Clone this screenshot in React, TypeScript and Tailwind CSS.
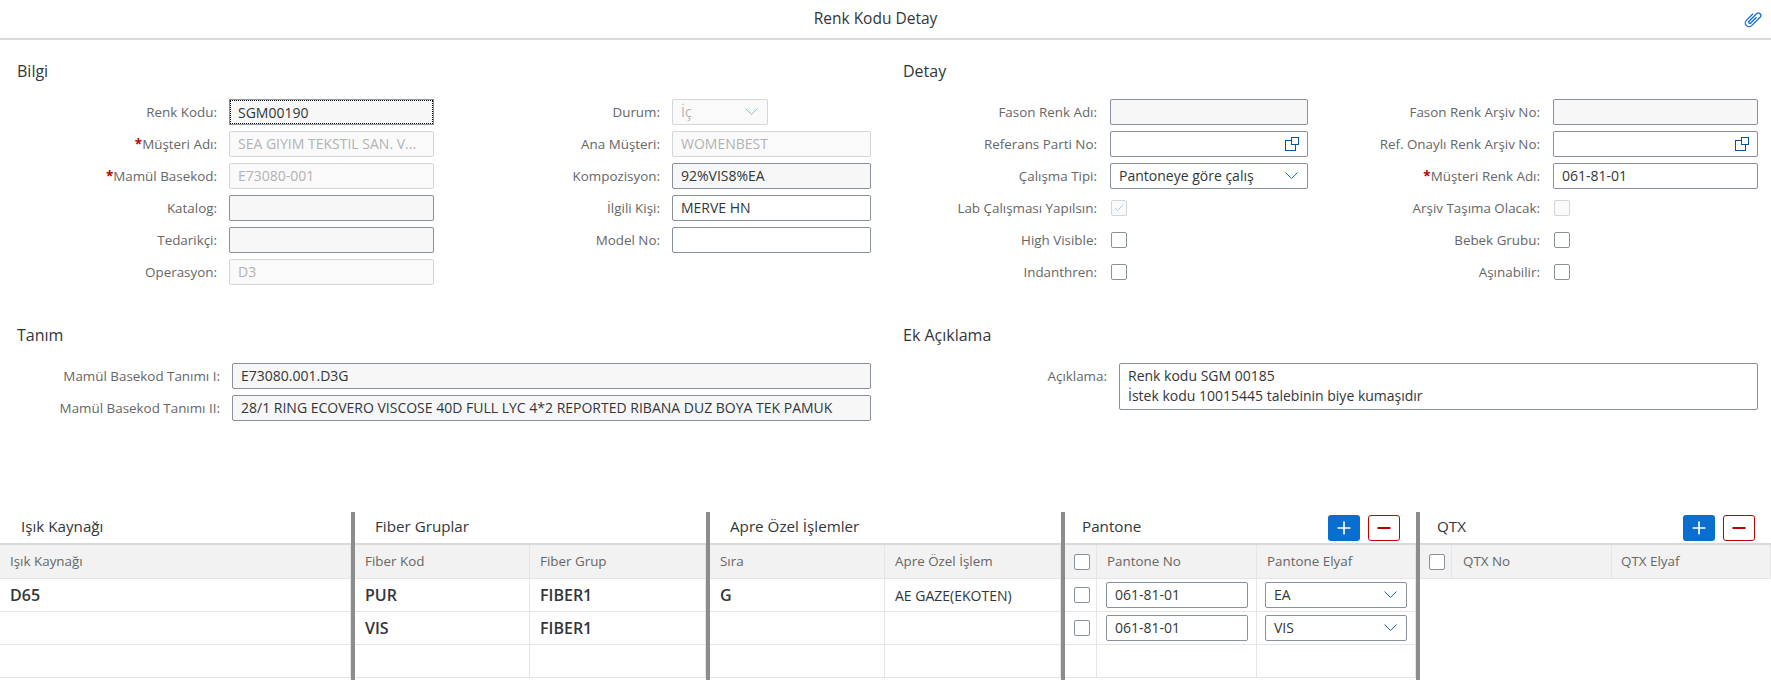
import { ReactNode } from "react";
import { Check, Plus, Minus } from "lucide-react";

const labelCls = "text-right text-[13.4px] text-[#666666] whitespace-nowrap leading-[26px]";
const inputBase = "h-[26px] rounded-[2px] border px-[8px] text-[14px] leading-[24px] whitespace-nowrap overflow-hidden";
const editable = "border-[#89919a] bg-white text-[#32363a]";
const readonly = "border-[#89919a] bg-[#f7f7f7] text-[#32363a]";
const disabled = "border-[#d3d6d9] bg-[#fafafa] text-[#b3b3b3]";

function Label({ text, required, width }: { text: string; required?: boolean; width: number }) {
    return (
        <div className={labelCls} style={{ width }}>
            {required && <span className="font-bold text-[#b00]">*</span>}
            {text}:
        </div>
    );
}

function ValueHelp() {
    return (
        <svg width="14" height="14" viewBox="0 0 14 14" fill="none" stroke="#0854a0" strokeWidth="1">
            <rect x="0.5" y="3.5" width="10" height="10" />
            <rect x="6.5" y="0.5" width="7" height="7" fill="white" />
        </svg>
    );
}

function Chevron({ dim }: { dim?: boolean }) {
    return (
        <svg width="13" height="8" viewBox="0 0 13 8" fill="none" stroke={dim ? "#8fb8e2" : "#0a6ed1"} strokeWidth="1">
            <path d="M0.5 0.5L6.5 6.5L12.5 0.5" />
        </svg>
    );
}

function Select({ value, dim, width }: { value: string; dim?: boolean; width: number }) {
    return (
        <div style={{ width }} className={`${inputBase} ${dim ? disabled : editable} flex items-center justify-between pr-[9px]`}>
            <span>{value}</span>
            <Chevron dim={dim} />
        </div>
    );
}

function Field({ value, cls, width, children }: { value?: string; cls: string; width: number; children?: ReactNode }) {
    return (
        <div style={{ width }} className={`${inputBase} ${cls} flex items-center justify-between pr-[8px]`}>
            <span>{value}</span>
            {children}
        </div>
    );
}

function CheckBox({ on, dim }: { on?: boolean; dim?: boolean }) {
    return (
        <div className={`flex h-[16px] w-[16px] items-center justify-center rounded-[2px] border ${dim ? "border-[#d3d6d9] bg-[#fafafa]" : "border-[#89919a] bg-white"}`}>
            {on && <Check size={12} strokeWidth={1.2} className="text-[#7aa9d8]" />}
        </div>
    );
}

function Row({ children }: { children: ReactNode }) {
    return <div className="flex h-[26px] items-center">{children}</div>;
}

function Title({ children, className = "" }: { children: ReactNode; className?: string }) {
    return <div className={`text-[16px] leading-[20px] text-[#32363a] ${className}`}>{children}</div>;
}

function TableButtons() {
    return (
        <div className="flex gap-[8px]">
            <div className="flex h-[26px] w-[32px] items-center justify-center rounded-[3px] bg-[#0a6ed1] text-white">
                <Plus size={20} strokeWidth={2} />
            </div>
            <div className="flex h-[26px] w-[32px] items-center justify-center rounded-[3px] border border-[#bb0000] bg-white text-[#bb0000]">
                <Minus size={20} strokeWidth={2.2} />
            </div>
        </div>
    );
}

type Col = { w: number; t?: ReactNode; pl?: number; bodyPl?: number };

function Panel({ title, width, cols, rows, tools, divider = true, titlePl }: { title: string; width: number; cols: Col[]; rows: ReactNode[][]; tools?: boolean; divider?: boolean; titlePl: number }) {
    return (
        <div style={{ width }} className={`h-[168px] shrink-0 overflow-hidden ${divider ? "border-r-4 border-[#8c8c8c]" : ""}`}>
            <div className="flex h-[31px] items-center justify-between pr-[16px]" style={{ paddingLeft: titlePl }}>
                <div className="-mt-[2px] text-[15.2px] text-[#32363a]">{title}</div>
                {tools && <TableButtons />}
            </div>
            <div className="flex h-[36px] items-center border-t-2 border-b border-t-[#d9d9d9] border-b-[#e5e5e5] bg-[#f2f2f2]">
                {cols.map((c, i) => (
                    <div key={i} style={{ width: c.w, paddingLeft: c.pl ?? 10 }} className="flex h-full shrink-0 items-center border-r border-[#e5e5e5] text-[13.4px] text-[#666666]">
                        {c.t}
                    </div>
                ))}
            </div>
            {rows.map((r, ri) => (
                <div key={ri} className="flex h-[33px] items-center border-b border-[#e5e5e5]">
                    {r.map((cell, i) => (
                        <div key={i} style={{ width: cols[i].w, paddingLeft: cols[i].bodyPl ?? cols[i].pl ?? 10 }} className="flex h-full shrink-0 items-center border-r border-[#e5e5e5] text-[14px] text-[#32363a]">
                            {cell}
                        </div>
                    ))}
                </div>
            ))}
        </div>
    );
}

const B = ({ children }: { children: ReactNode }) => <span className="text-[16px] font-semibold">{children}</span>;

export default function App() {
    return (
        <div className="h-[680px] w-[1771px] overflow-hidden bg-white font-['Open_Sans','Liberation_Sans',sans-serif]">
            <header className="flex h-[40px] items-center justify-center border-b-2 border-[#d9d9d9] pr-[20px]">
                <div className="flex-1" />
                <div className="text-[15.5px] text-[#32363a]">Renk Kodu Detay</div>
                <div className="flex flex-1 justify-end">
                    {/* paperclip */}
                    <svg width="20" height="20" viewBox="0 0 16 16" fill="none" stroke="#0a6ed1" strokeWidth="1" className="-mr-[12px]">
                        <g transform="rotate(45 8 8)">
                            <path d="M5 5V12.5a3 3 0 0 0 6 0V3a2 2 0 0 0-4 0V11.5a1 1 0 0 0 2 0V5" />
                        </g>
                    </svg>
                </div>
            </header>

            <div className="flex pt-[21px]">
                <section className="w-[886px] pl-[17px]">
                    <Title>Bilgi</Title>
                    <div className="mt-[18px] flex">
                        <div className="flex flex-col gap-[6px]">
                            <Row><Label text="Renk Kodu" width={200} /><div className="ml-[12px]"><div className="flex h-[26px] w-[205px] items-center border border-[#89919a] bg-[#f7f7f7] px-[8px] text-[14px] text-[#32363a] outline-1 -outline-offset-2 outline-dotted outline-black">SGM00190</div></div></Row>
                            <Row><Label text="Müşteri Adı" required width={200} /><div className="ml-[12px]"><Field value="SEA GIYIM TEKSTIL SAN. V..." cls={disabled} width={205} /></div></Row>
                            <Row><Label text="Mamül Basekod" required width={200} /><div className="ml-[12px]"><Field value="E73080-001" cls={disabled} width={205} /></div></Row>
                            <Row><Label text="Katalog" width={200} /><div className="ml-[12px]"><Field cls={readonly} width={205} /></div></Row>
                            <Row><Label text="Tedarikçi" width={200} /><div className="ml-[12px]"><Field cls={readonly} width={205} /></div></Row>
                            <Row><Label text="Operasyon" width={200} /><div className="ml-[12px]"><Field value="D3" cls={disabled} width={205} /></div></Row>
                        </div>
                        <div className="flex flex-col gap-[6px]">
                            <Row><Label text="Durum" width={226} /><div className="ml-[12px]"><Select value="İç" dim width={96} /></div></Row>
                            <Row><Label text="Ana Müşteri" width={226} /><div className="ml-[12px]"><Field value="WOMENBEST" cls={disabled} width={199} /></div></Row>
                            <Row><Label text="Kompozisyon" width={226} /><div className="ml-[12px]"><Field value="92%VIS8%EA" cls={readonly} width={199} /></div></Row>
                            <Row><Label text="İlgili Kişi" width={226} /><div className="ml-[12px]"><Field value="MERVE HN" cls={editable} width={199} /></div></Row>
                            <Row><Label text="Model No" width={226} /><div className="ml-[12px]"><Field cls={editable} width={199} /></div></Row>
                        </div>
                    </div>
                </section>
                <section className="flex-1 pl-[17px]">
                    <Title>Detay</Title>
                    <div className="mt-[18px] flex">
                        <div className="flex flex-col gap-[6px]">
                            <Row><Label text="Fason Renk Adı" width={194} /><div className="ml-[13px]"><Field cls={readonly} width={198} /></div></Row>
                            <Row><Label text="Referans Parti No" width={194} /><div className="ml-[13px]"><Field cls={editable} width={198}><ValueHelp /></Field></div></Row>
                            <Row><Label text="Çalışma Tipi" width={194} /><div className="ml-[13px]"><Select value="Pantoneye göre çalış" width={198} /></div></Row>
                            <Row><Label text="Lab Çalışması Yapılsın" width={194} /><div className="ml-[14px] w-[197px]"><CheckBox on dim /></div></Row>
                            <Row><Label text="High Visible" width={194} /><div className="ml-[14px] w-[197px]"><CheckBox /></div></Row>
                            <Row><Label text="Indanthren" width={194} /><div className="ml-[14px] w-[197px]"><CheckBox /></div></Row>
                        </div>
                        <div className="flex flex-col gap-[6px]">
                            <Row><Label text="Fason Renk Arşiv No" width={232} /><div className="ml-[13px]"><Field cls={readonly} width={205} /></div></Row>
                            <Row><Label text="Ref. Onaylı Renk Arşiv No" width={232} /><div className="ml-[13px]"><Field cls={editable} width={205}><ValueHelp /></Field></div></Row>
                            <Row><Label text="Müşteri Renk Adı" required width={232} /><div className="ml-[13px]"><Field value="061-81-01" cls={editable} width={205} /></div></Row>
                            <Row><Label text="Arşiv Taşıma Olacak" width={232} /><div className="ml-[14px]"><CheckBox dim /></div></Row>
                            <Row><Label text="Bebek Grubu" width={232} /><div className="ml-[14px]"><CheckBox /></div></Row>
                            <Row><Label text="Aşınabilir" width={232} /><div className="ml-[14px]"><CheckBox /></div></Row>
                        </div>
                    </div>
                </section>
            </div>

            <div className="mt-[40px] flex">
                <section className="w-[886px] pl-[17px]">
                    <Title>Tanım</Title>
                    <div className="mt-[18px] flex flex-col gap-[6px]">
                        <Row><Label text="Mamül Basekod Tanımı I" width={203} /><div className="ml-[12px]"><Field value="E73080.001.D3G" cls={readonly} width={639} /></div></Row>
                        <Row><Label text="Mamül Basekod Tanımı II" width={203} /><div className="ml-[12px]"><Field value="28/1 RING ECOVERO VISCOSE 40D FULL LYC 4*2 REPORTED RIBANA DUZ BOYA TEK PAMUK" cls={readonly} width={639} /></div></Row>
                    </div>
                </section>
                <section className="flex-1 pl-[17px]">
                    <Title>Ek Açıklama</Title>
                    <div className="mt-[18px] flex">
                        <Label text="Açıklama" width={204} />
                        <div className="ml-[12px] h-[47px] w-[639px] rounded-[2px] border border-[#89919a] px-[8px] pt-[2px] text-[14px] leading-[20px] text-[#32363a]">
                            Renk kodu SGM 00185
                            <br />
                            İstek kodu 10015445 talebinin biye kumaşıdır
                        </div>
                    </div>
                </section>
            </div>

            <div className="mt-[91px] flex">
                <Panel title="Işık Kaynağı" width={355} titlePl={21}
                    cols={[{ w: 351, t: "Işık Kaynağı" }]}
                    rows={[[<B>D65</B>], [null], [null]]} />
                <Panel title="Fiber Gruplar" width={355} titlePl={20}
                    cols={[{ w: 175, t: "Fiber Kod" }, { w: 176, t: "Fiber Grup" }]}
                    rows={[[<B>PUR</B>, <B>FIBER1</B>], [<B>VIS</B>, <B>FIBER1</B>], [null, null]]} />
                <Panel title="Apre Özel İşlemler" width={355} titlePl={20}
                    cols={[{ w: 175, t: "Sıra" }, { w: 176, t: "Apre Özel İşlem" }]}
                    rows={[[<B>G</B>, "AE GAZE(EKOTEN)"], [null, null], [null, null]]} />
                <Panel title="Pantone" width={355} titlePl={17} tools
                    cols={[
                        { w: 32, t: <CheckBox />, pl: 9 },
                        { w: 160, t: "Pantone No", pl: 10, bodyPl: 9 },
                        { w: 159, t: "Pantone Elyaf", pl: 10, bodyPl: 8 },
                    ]}
                    rows={[
                        [<CheckBox />, <Field value="061-81-01" cls={editable} width={142} />, <Select value="EA" width={142} />],
                        [<CheckBox />, <Field value="061-81-01" cls={editable} width={142} />, <Select value="VIS" width={142} />],
                        [null, null, null],
                    ]} />
                <Panel title="QTX" width={351} titlePl={17} tools divider={false}
                    cols={[
                        { w: 32, t: <CheckBox />, pl: 9 },
                        { w: 160, t: "QTX No", pl: 11 },
                        { w: 159, t: "QTX Elyaf", pl: 9 },
                    ]}
                    rows={[]} />
            </div>
        </div>
    );
}
